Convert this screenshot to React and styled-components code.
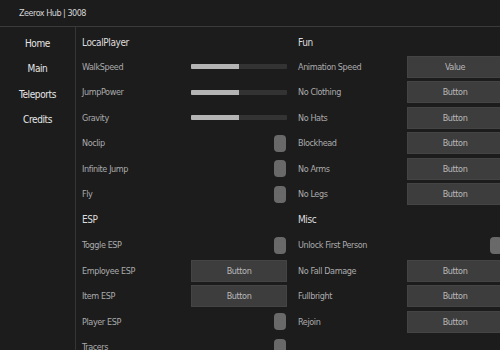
import styled, { createGlobalStyle } from 'styled-components'

const GlobalStyle = createGlobalStyle`
  html, body {
    margin: 0;
    padding: 0;
    background: #1c1c1d;
    overflow: hidden;
  }
  body {
    font-family: "DejaVu Sans Condensed", "Liberation Sans", sans-serif;
  }
`

const Window = styled.div`
  width: 500px;
  height: 350px;
  background: #1c1c1d;
  display: flex;
  flex-direction: column;
  overflow: hidden;
`

const TitleBar = styled.div`
  height: 26px;
  flex: none;
  display: flex;
  align-items: center;
  padding-left: 19px;
  border-bottom: 1px solid #3a3a3b;
  color: #d6d6d6;
  font-size: 9px;
  letter-spacing: -0.5px;
`

const Body = styled.div`
  flex: 1;
  display: flex;
  min-height: 0;
`

const Sidebar = styled.nav`
  width: 75px;
  flex: none;
  border-right: 1px solid #353536;
  display: flex;
  flex-direction: column;
  align-items: center;
  padding-top: 4px;
`

const NavItem = styled.div`
  height: 25.3px;
  display: flex;
  align-items: center;
  color: #e6e6e6;
  font-size: 10px;
  letter-spacing: -0.4px;
`

const Content = styled.div`
  flex: 1;
  display: flex;
  gap: 11px;
  padding: 4px 0 0 6px;
  overflow: hidden;
`

const Column = styled.div`
  width: 205px;
  flex: none;
  display: flex;
  flex-direction: column;
`

const Heading = styled.div`
  height: ${(p) => (p.$first ? '23px' : '25.5px')};
  flex: none;
  display: flex;
  align-items: center;
  color: #dcdcdc;
  font-size: 10px;
  letter-spacing: -0.4px;
`

const Row = styled.div`
  height: 25.5px;
  flex: none;
  display: flex;
  align-items: center;
  justify-content: space-between;
`

const Label = styled.span`
  color: #ababab;
  font-size: 9px;
  letter-spacing: -0.4px;
`

const Slider = styled.div`
  width: 96px;
  height: 5px;
  background: #333334;
  border-radius: 1px;
  overflow: hidden;
`

const Fill = styled.div`
  height: 100%;
  background: #b4b4b4;
`

const Toggle = styled.div`
  width: 12px;
  height: 17px;
  border-radius: 4px;
  background: #69696a;
  margin-right: 1px;
`

const Button = styled.div`
  width: 96px;
  height: 22px;
  box-sizing: border-box;
  background: #3d3d3e;
  border: 1px solid #444445;
  display: flex;
  align-items: center;
  justify-content: center;
  color: #b9b9b9;
  font-size: 9px;
  letter-spacing: -0.4px;
`

const Control = ({ type, value, text }) => {
  if (type === 'slider')
    return (
      <Slider>
        <Fill style={{ width: `${value}%` }} />
      </Slider>
    )
  if (type === 'toggle') return <Toggle />
  return <Button>{text}</Button>
}

const columns = [
  [
    { heading: 'LocalPlayer' },
    { label: 'WalkSpeed', type: 'slider', value: 50 },
    { label: 'JumpPower', type: 'slider', value: 50 },
    { label: 'Gravity', type: 'slider', value: 50 },
    { label: 'Noclip', type: 'toggle' },
    { label: 'Infinite Jump', type: 'toggle' },
    { label: 'Fly', type: 'toggle' },
    { heading: 'ESP' },
    { label: 'Toggle ESP', type: 'toggle' },
    { label: 'Employee ESP', type: 'button', text: 'Button' },
    { label: 'Item ESP', type: 'button', text: 'Button' },
    { label: 'Player ESP', type: 'toggle' },
    { label: 'Tracers', type: 'toggle' },
  ],
  [
    { heading: 'Fun' },
    { label: 'Animation Speed', type: 'button', text: 'Value' },
    { label: 'No Clothing', type: 'button', text: 'Button' },
    { label: 'No Hats', type: 'button', text: 'Button' },
    { label: 'Blockhead', type: 'button', text: 'Button' },
    { label: 'No Arms', type: 'button', text: 'Button' },
    { label: 'No Legs', type: 'button', text: 'Button' },
    { heading: 'Misc' },
    { label: 'Unlock First Person', type: 'toggle' },
    { label: 'No Fall Damage', type: 'button', text: 'Button' },
    { label: 'Fullbright', type: 'button', text: 'Button' },
    { label: 'Rejoin', type: 'button', text: 'Button' },
  ],
]

export default function App() {
  return (
    <Window>
      <GlobalStyle />
      <TitleBar>Zeerox Hub | 3008</TitleBar>
      <Body>
        <Sidebar>
          {['Home', 'Main', 'Teleports', 'Credits'].map((n) => (
            <NavItem key={n}>{n}</NavItem>
          ))}
        </Sidebar>
        <Content>
          {columns.map((col, ci) => (
            <Column key={ci}>
              {col.map((item, i) =>
                item.heading ? (
                  <Heading key={i} $first={i === 0}>
                    {item.heading}
                  </Heading>
                ) : (
                  <Row key={i}>
                    <Label>{item.label}</Label>
                    <Control {...item} />
                  </Row>
                )
              )}
            </Column>
          ))}
        </Content>
      </Body>
    </Window>
  )
}
